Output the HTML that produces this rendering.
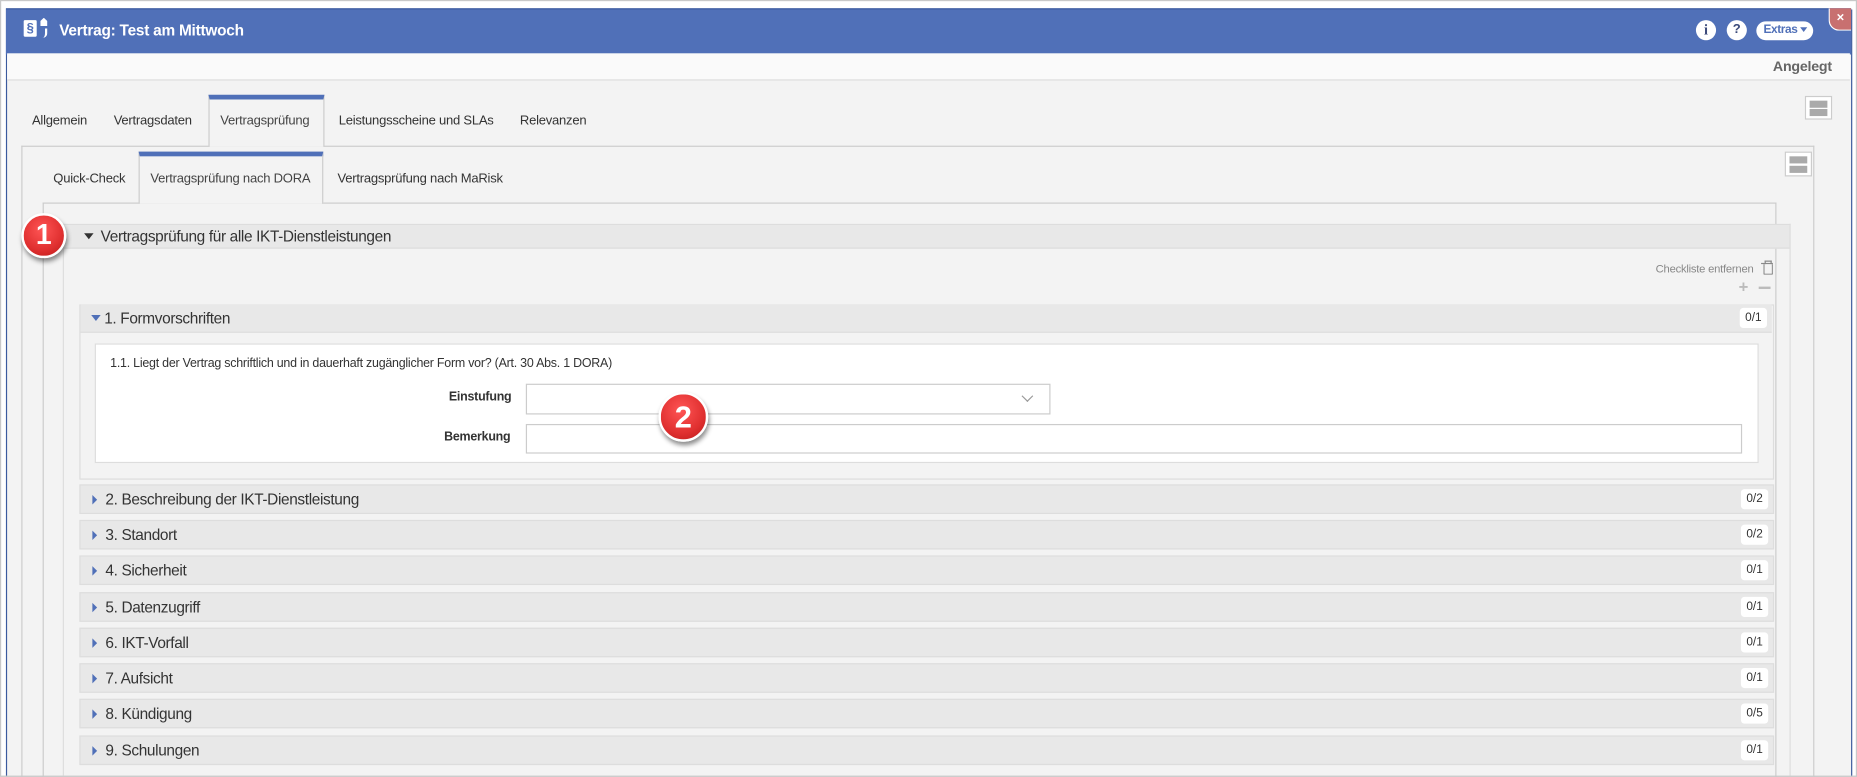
<!DOCTYPE html>
<html><head><meta charset="utf-8"><style>
html,body{margin:0;padding:0;background:#fff;width:1857px;height:777px;overflow:hidden}
#w{position:absolute;left:0;top:0;width:1568px;height:656px;overflow:hidden;transform:scale(1.18431);transform-origin:0 0;font-family:"Liberation Sans",sans-serif;color:#333}
.a{position:absolute}
.t{position:absolute;white-space:nowrap;font-size:11px;letter-spacing:-0.2px}
.sec{position:absolute;left:67px;width:1429px;height:23px;background:#e8e8e8;border:1px solid #ddd}
.sec span{position:absolute;left:21px;top:4px;font-size:13px;letter-spacing:-0.3px;color:#333}
.sec i{position:absolute;left:10px;top:8px;width:0;height:0;border-top:4px solid transparent;border-bottom:4px solid transparent;border-left:4px solid #5070b8}
.sec b{position:absolute;right:4px;top:3px;width:23px;height:17px;background:#fff;border-radius:3px;font-weight:normal;font-size:10px;text-align:center;line-height:17px;color:#333}
.badge{position:absolute;border-radius:50%;background:radial-gradient(circle at 45% 35%,#f55 0%,#e03030 60%,#b81818 100%);border:2px solid #fff;box-shadow:1px 3px 4px rgba(0,0,0,.45);color:#fff;font-weight:bold;text-align:center;font-family:"Liberation Sans",sans-serif}
.lay{position:absolute;background:#fff;border:1px solid #ccc}
.lay div{position:absolute;left:3px;right:3px;height:6px;background:#aaa}
</style></head><body><div id="w">
<div class="a" style="left:5px;top:8px;width:1557px;height:648px;background:#f3f3f3;border-left:1px solid #3b5a9e;border-right:1px solid #3b5a9e"></div>
<div class="a" style="left:5px;top:7px;width:1558px;height:38px;background:#5070b8;border-top:1px solid #3b5a9e"></div>
<div class="a" style="left:6px;top:45px;width:1556px;height:22px;background:#fafafa;border-bottom:1px solid #ddd"></div>
<div class="a" style="left:0;top:0;width:1568px;height:656px;border:1px solid #c8c8c8;box-sizing:border-box"></div>
<!-- logo -->
<div class="a" style="left:20px;top:17px;width:11px;height:14px;background:#fff;border-radius:1px;color:#5070b8;font-size:11px;font-weight:bold;line-height:14px;text-align:center">§</div>
<div class="a" style="left:34px;top:15px;width:6px;height:7px;background:#fff;clip-path:polygon(50% 0,100% 40%,100% 100%,0 100%,0 40%)"></div>
<div class="a" style="left:33px;top:24px;width:5px;height:8px;border-right:2px solid #fff;border-radius:0 0 4px 0"></div>
<div class="t" style="left:50px;top:18px;color:#fff;font-weight:bold;font-size:13px">Vertrag: Test am Mittwoch</div>
<div class="a" style="left:1432px;top:17px;width:17px;height:17px;border-radius:50%;background:#fff;color:#3b4a7a;font-weight:bold;font-size:12px;text-align:center;line-height:17px;font-family:'Liberation Serif',serif">i</div>
<div class="a" style="left:1458px;top:17px;width:17px;height:17px;border-radius:50%;background:#fff;color:#3b4a7a;font-weight:bold;font-size:11px;text-align:center;line-height:17px">?</div>
<div class="a" style="left:1483px;top:18px;width:48px;height:16px;border-radius:8px;background:#fff;color:#5070b8;font-weight:bold;font-size:10px;line-height:16px;text-indent:6px;letter-spacing:-0.3px">Extras<span style="display:inline-block;margin-left:2px;border-left:3px solid transparent;border-right:3px solid transparent;border-top:4px solid #5070b8;vertical-align:1px"></span></div>
<div class="a" style="left:1544px;top:7px;width:18px;height:18px;background:#c87070;border-radius:0 0 0 9px;border-left:1px solid #fff;border-bottom:1px solid #fff;color:#fff;font-size:11px;font-weight:bold;text-align:center;line-height:16px">×</div>
<div class="t" style="left:1497px;top:49px;font-weight:bold;color:#666;font-size:12px">Angelegt</div>
<!-- main tabs -->
<div class="a" style="left:18px;top:123px;width:1512px;height:540px;border:1px solid #ccc;border-bottom:none"></div>
<div class="a" style="left:176px;top:80px;width:98px;height:44px;background:#f3f3f3;border:1px solid #ccc;border-bottom:none;border-top:4px solid #5070b8;box-sizing:border-box"></div>
<div class="t" style="left:27px;top:96px">Allgemein</div>
<div class="t" style="left:96px;top:96px">Vertragsdaten</div>
<div class="t" style="left:186px;top:96px;color:#444">Vertragsprüfung</div>
<div class="t" style="left:286px;top:96px">Leistungsscheine und SLAs</div>
<div class="t" style="left:439px;top:96px">Relevanzen</div>
<div class="lay" style="left:1524px;top:81px;width:21px;height:18px"><div style="top:3px"></div><div style="top:10px"></div></div>
<!-- sub tabs -->
<div class="a" style="left:36px;top:171px;width:1462px;height:490px;border:1px solid #ccc;border-bottom:none"></div>
<div class="a" style="left:117px;top:128px;width:156px;height:44px;background:#f3f3f3;border:1px solid #ccc;border-bottom:none;border-top:4px solid #5070b8;box-sizing:border-box"></div>
<div class="t" style="left:45px;top:145px">Quick-Check</div>
<div class="t" style="left:127px;top:145px;color:#444">Vertragsprüfung nach DORA</div>
<div class="t" style="left:285px;top:145px">Vertragsprüfung nach MaRisk</div>
<div class="lay" style="left:1507px;top:128px;width:21px;height:19px"><div style="top:3px"></div><div style="top:11px"></div></div>
<!-- main accordion -->
<div class="a" style="left:53px;top:189px;width:1457px;height:470px;border:1px solid #ddd;border-bottom:none"></div>
<div class="a" style="left:54px;top:190px;width:1457px;height:19px;background:#e8e8e8;border-bottom:1px solid #ddd"></div>
<div class="a" style="left:71px;top:197px;border-left:4px solid transparent;border-right:4px solid transparent;border-top:5px solid #333"></div>
<div class="t" style="left:85px;top:192px;font-size:13px;letter-spacing:-0.3px">Vertragsprüfung für alle IKT-Dienstleistungen</div>
<div class="t" style="left:1398px;top:222px;font-size:9.5px;color:#888">Checkliste entfernen</div>
<div class="a" style="left:1489px;top:223px;width:6px;height:8px;border:1px solid #888;border-top:none;border-radius:0 0 1px 1px"></div>
<div class="a" style="left:1487px;top:222px;width:10px;height:1px;background:#888"></div>
<div class="a" style="left:1490px;top:220px;width:4px;height:2px;border:1px solid #888;border-bottom:none"></div>
<div class="t" style="left:1468px;top:234px;font-size:14px;color:#bbb;font-weight:bold">+</div>
<div class="a" style="left:1485px;top:242px;width:10px;height:2px;background:#bbb"></div>
<!-- section 1 -->
<div class="a" style="left:67px;top:257px;width:1429px;height:146px;border:1px solid #ddd;background:#f3f3f3"></div>
<div class="sec" style="top:257px;border:none;border-bottom:1px solid #ddd;left:68px;width:1428px"><i style="left:9px;top:9px;border-left:4px solid transparent;border-right:4px solid transparent;border-top:5px solid #5070b8;border-bottom:none"></i><span style="left:20px">1. Formvorschriften</span><b>0/1</b></div>
<div class="a" style="left:80px;top:290px;width:1403px;height:99px;background:#fff;border:1px solid #ddd"></div>
<div class="t" style="left:93px;top:301px;font-size:10.5px">1.1. Liegt der Vertrag schriftlich und in dauerhaft zugänglicher Form vor? (Art. 30 Abs. 1 DORA)</div>
<div class="t" style="left:379px;top:329px;font-size:10.5px;font-weight:bold">Einstufung</div>
<div class="a" style="left:444px;top:324px;width:441px;height:24px;border:1px solid #ccc;background:#fff"></div>
<div class="a" style="left:864px;top:331px;width:6px;height:6px;border-right:1px solid #999;border-bottom:1px solid #999;transform:rotate(45deg)"></div>
<div class="t" style="left:375px;top:363px;font-size:10.5px;font-weight:bold">Bemerkung</div>
<div class="a" style="left:444px;top:358px;width:1025px;height:23px;border:1px solid #ccc;background:#fff"></div>
<!-- other sections -->
<div class="sec" style="top:409px"><i></i><span>2. Beschreibung der IKT-Dienstleistung</span><b>0/2</b></div>
<div class="sec" style="top:439px"><i></i><span>3. Standort</span><b>0/2</b></div>
<div class="sec" style="top:469px"><i></i><span>4. Sicherheit</span><b>0/1</b></div>
<div class="sec" style="top:500px"><i></i><span>5. Datenzugriff</span><b>0/1</b></div>
<div class="sec" style="top:530px"><i></i><span>6. IKT-Vorfall</span><b>0/1</b></div>
<div class="sec" style="top:560px"><i></i><span>7. Aufsicht</span><b>0/1</b></div>
<div class="sec" style="top:590px"><i></i><span>8. Kündigung</span><b>0/5</b></div>
<div class="sec" style="top:621px"><i></i><span>9. Schulungen</span><b>0/1</b></div>
<div class="a" style="left:0;top:655px;width:1568px;height:1px;background:#c8c8c8"></div>
<!-- badges -->
<div class="badge" style="left:18px;top:180px;width:34px;height:34px;font-size:24px;line-height:34px">1</div>
<div class="badge" style="left:556px;top:331px;width:38px;height:38px;font-size:26px;line-height:38px">2</div>
</div></body></html>
